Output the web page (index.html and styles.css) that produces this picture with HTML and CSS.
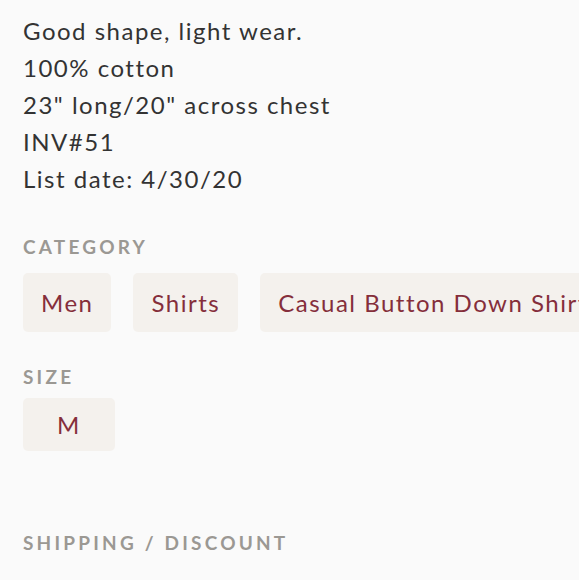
FILE: index.html
```html
<!DOCTYPE html>
<html>
<head>
<meta charset="utf-8">
<link rel="stylesheet" href="styles.css">
</head>
<body>
<div class="page">
  <div class="desc">
    <div>Good shape, light wear.</div>
    <div>100% cotton</div>
    <div>23" long/20" across chest</div>
    <div>INV#51</div>
    <div>List date: 4/30/20</div>
  </div>
  <section class="group cat">
    <h3 class="label">CATEGORY</h3>
    <div class="chips">
      <span class="chip">Men</span>
      <span class="chip">Shirts</span>
      <span class="chip">Casual Button Down Shirts</span>
    </div>
  </section>
  <section class="group size">
    <h3 class="label">SIZE</h3>
    <div class="chips">
      <span class="chip chip-size">M</span>
    </div>
  </section>
  <section class="group ship">
    <h3 class="label">SHIPPING / DISCOUNT</h3>
  </section>
</div>
</body>
</html>
```
FILE: styles.css
```css
html, body {
  margin: 0;
  padding: 0;
  background: #fafafa;
  overflow: hidden;
}
.page {
  width: 579px;
  height: 580px;
  padding: 12px 0 0 23px;
  box-sizing: border-box;
  font-family: Lato, "Noto Sans", sans-serif;
  color: #333333;
  overflow: hidden;
}
.desc {
  font-size: 24px;
  line-height: 37px;
  letter-spacing: 1.5px;
}
.label {
  margin: 0;
  font-size: 19px;
  line-height: 24px;
  font-weight: 700;
  letter-spacing: 3.2px;
  color: #9b9893;
}
.cat { margin-top: 38px; }
.chips {
  display: flex;
  flex-wrap: nowrap;
  gap: 22px;
  margin-top: 14px;
}
.chip {
  flex: none;
  display: flex;
  align-items: center;
  height: 59px;
  padding: 0 18px;
  background: #f4f1ed;
  border-radius: 5px;
  color: #852e3b;
  font-size: 24px;
  letter-spacing: 1.5px;
  white-space: nowrap;
}
.size { margin-top: 33px; }
.size .chips { margin-top: 9px; }
.chip-size {
  width: 92px;
  height: 53px;
  padding: 0;
  justify-content: center;
}
.ship { margin-top: 80px; }
```
